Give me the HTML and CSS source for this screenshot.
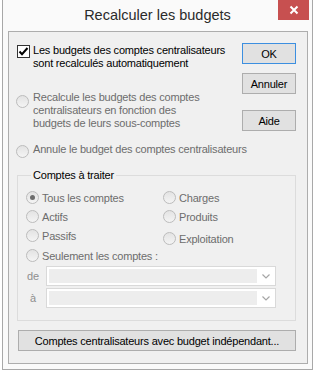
FILE: index.html
```html
<!DOCTYPE html>
<html lang="fr">
<head>
    <meta charset="UTF-8">
    <meta name="viewport" content="width=device-width, initial-scale=1.0">
    <title>Recalculer les budgets</title>
    <link rel="stylesheet" href="styles.css">
</head>
<body>
    <div class="window">
        <div class="titlebar">
            <span class="title">Recalculer les budgets</span>
            <button class="close" aria-label="Fermer">
                <svg width="10" height="10" viewBox="0 0 10 10"><path d="M1.5 1.5L8.5 8.5M8.5 1.5L1.5 8.5" stroke="#fff" stroke-width="2"/></svg>
            </button>
        </div>

        <div class="client">
            <div class="top">
                <div class="options">
                    <label class="check">
                        <span class="box"><svg width="11" height="11" viewBox="0 0 11 11"><path d="M1.5 5.5L4 8.2L9.5 2" fill="none" stroke="#000" stroke-width="2"/></svg></span>
                        <span class="text">Les budgets des comptes centralisateurs<br>sont recalculés automatiquement</span>
                    </label>
                    <label class="opt opt-multi disabled">
                        <span class="radio"></span>
                        <span class="text">Recalcule les budgets des comptes<br>centralisateurs en fonction des<br>budgets de leurs sous-comptes</span>
                    </label>
                    <label class="opt opt-single disabled">
                        <span class="radio"></span>
                        <span class="text">Annule le budget des comptes centralisateurs</span>
                    </label>
                </div>
                <div class="actions">
                    <button class="btn btn-default">OK</button>
                    <button class="btn btn-cancel">Annuler</button>
                    <button class="btn btn-help">Aide</button>
                </div>
            </div>

            <fieldset class="group">
                <legend>Comptes à traiter</legend>
                <div class="choices">
                    <div class="col">
                        <label class="item disabled"><span class="radio checked"></span>Tous les comptes</label>
                        <label class="item disabled"><span class="radio"></span>Actifs</label>
                        <label class="item disabled"><span class="radio"></span>Passifs</label>
                        <label class="item item-last disabled"><span class="radio"></span>Seulement les comptes :</label>
                    </div>
                    <div class="col col-right">
                        <label class="item disabled"><span class="radio"></span>Charges</label>
                        <label class="item disabled"><span class="radio"></span>Produits</label>
                        <label class="item item-shift disabled"><span class="radio"></span>Exploitation</label>
                    </div>
                </div>
                <div class="range">
                    <span class="range-label">de</span>
                    <div class="combo">
                        <span class="field"></span>
                        <span class="arrow"><svg width="8" height="5" viewBox="0 0 8 5"><path d="M0.5 0.5L4 4L7.5 0.5" fill="none" stroke="#a6a6a6" stroke-width="1.2"/></svg></span>
                    </div>
                </div>
                <div class="range range-to">
                    <span class="range-label">à</span>
                    <div class="combo">
                        <span class="field"></span>
                        <span class="arrow"><svg width="8" height="5" viewBox="0 0 8 5"><path d="M0.5 0.5L4 4L7.5 0.5" fill="none" stroke="#a6a6a6" stroke-width="1.2"/></svg></span>
                    </div>
                </div>
            </fieldset>

            <button class="btn btn-wide">Comptes centralisateurs avec budget indépendant...</button>
        </div>
    </div>
</body>
</html>
```

FILE: styles.css
```css
body {
    margin: 0;
    background: #ffffff;
    font-family: 'Liberation Sans', Arial, sans-serif;
    font-size: 11px;
    letter-spacing: -0.2px;
    color: #000;
}
.window {
    box-sizing: border-box;
    width: 311px;
    height: 370px;
    margin-left: 2px;
    background: #fafafa;
    border: 1px solid #a8a8a8;
    border-top: none;
}
.titlebar {
    display: grid;
    grid-template-columns: 34px 1fr 34px;
    height: 31px;
}
.title {
    grid-column: 2;
    text-align: center;
    font-size: 14.5px;
    letter-spacing: 0;
    line-height: 30px;
    color: #2b2b2b;
}
.close {
    grid-column: 3;
    width: 31px;
    height: 20px;
    padding: 0;
    border: none;
    background: #c75050;
    display: flex;
    align-items: center;
    justify-content: center;
}
.client {
    box-sizing: border-box;
    width: 300px;
    height: 333px;
    margin-left: 5px;
    padding-top: 11px;
    background: #f0f0f0;
    border: 1px solid #adadad;
}
.top {
    display: flex;
}
.options {
    flex: 1;
    min-width: 0;
    margin-left: 7px;
}
.text {
    line-height: 13px;
    white-space: nowrap;
}
.check {
    display: flex;
    align-items: flex-start;
    margin-top: 1px;
}
.box {
    box-sizing: border-box;
    flex: none;
    width: 13px;
    height: 13px;
    margin: 1px 3px 0 1px;
    background: #fff;
    border: 1px solid #333;
    display: flex;
    align-items: center;
    justify-content: center;
}
.opt {
    display: flex;
    align-items: flex-start;
}
.opt .radio {
    margin-right: 4px;
}
.opt-multi {
    margin-top: 21px;
}
.opt-multi .radio {
    margin-top: 4px;
}
.opt-single {
    margin-top: 13px;
}
.opt-single .radio {
    margin-top: 2px;
}
.disabled {
    color: #6d6d6d;
}
.radio {
    box-sizing: border-box;
    flex: none;
    width: 13px;
    height: 13px;
    border: 1px solid #bcbcbc;
    border-radius: 50%;
    background: linear-gradient(#e3e3e3, #f4f4f4);
    display: flex;
    align-items: center;
    justify-content: center;
}
.radio.checked::after {
    content: "";
    width: 5px;
    height: 5px;
    border-radius: 50%;
    background: #6d6d6d;
}
.actions {
    flex: none;
    display: flex;
    flex-direction: column;
    margin-right: 11px;
}
.btn {
    box-sizing: border-box;
    height: 21px;
    padding: 0;
    font-family: inherit;
    font-size: 11px;
    letter-spacing: -0.2px;
    color: #000;
    background: #e1e1e1;
    border: 1px solid #adadad;
}
.actions .btn {
    width: 54px;
}
.btn-default {
    border-color: #3c8fe0;
}
.btn-cancel {
    margin-top: 9px;
}
.btn-help {
    margin-top: 16px;
}
.group {
    box-sizing: border-box;
    width: 279px;
    height: 152px;
    margin: 11px 0 0 8px;
    padding: 6px 0 0 8px;
    border: 1px solid #dcdcdc;
    min-inline-size: 0;
}
.group legend {
    margin-left: 5px;
    padding: 0 2px;
    line-height: 13px;
    color: #000;
}
.choices {
    display: flex;
}
.col {
    width: 137px;
}
.col-right {
    width: auto;
}
.item {
    display: flex;
    align-items: center;
    height: 19px;
    white-space: nowrap;
}
.item .radio {
    margin-right: 3px;
}
.item-last {
    margin-top: 1px;
}
.item-shift {
    margin-top: 3px;
}
.range {
    display: flex;
    align-items: center;
    margin-top: 1px;
}
.range-to {
    margin-top: 2px;
}
.range-label {
    width: 14px;
    margin-right: 6px;
    text-align: center;
    color: #8e8e8e;
}
.combo {
    box-sizing: border-box;
    display: flex;
    width: 230px;
    height: 20px;
    padding: 2px 0 2px 2px;
    background: #fff;
    border: 1px solid #d9d9d9;
}
.field {
    flex: 1;
    background: #ededed;
}
.arrow {
    width: 18px;
    display: flex;
    align-items: center;
    justify-content: center;
}
.btn-wide {
    width: 278px;
    margin: 9px 0 0 9px;
}
```
